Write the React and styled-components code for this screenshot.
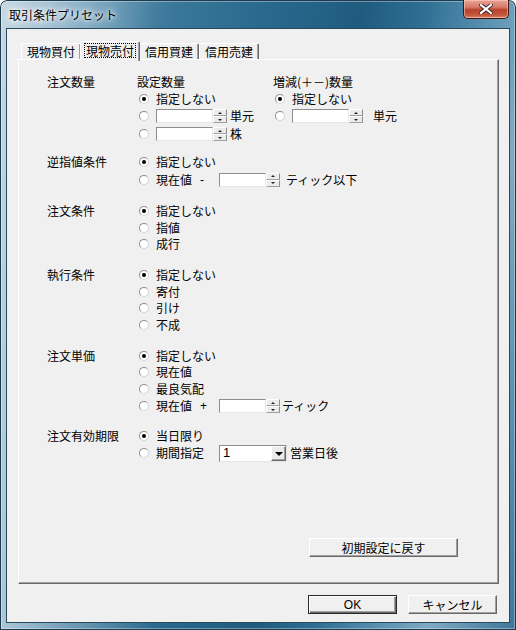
import React from 'react';
import styled, { createGlobalStyle } from 'styled-components';

const GlobalStyle = createGlobalStyle`
  html, body { margin: 0; padding: 0; background: #ffffff; }
  body {
    font-family: "Noto Sans CJK JP", "Noto Sans", "Liberation Sans", sans-serif;
    font-size: 12px;
    color: #000;
  }
`;

const Window = styled.div`
  width: 516px;
  height: 630px;
  box-sizing: border-box;
  padding: 0 7px 8px;
  display: flex;
  flex-direction: column;
  border-radius: 7px 7px 0 0;
  box-shadow: inset 0 0 0 1px #1d3c4f, inset 0 0 0 2px rgba(255, 255, 255, 0.35);
  background:
    linear-gradient(90deg, rgba(255,255,255,0.5) 0%, rgba(255,255,255,0.2) 18%, rgba(255,255,255,0) 30%),
    linear-gradient(100deg, #8fb2c7 0%, #5f93b2 16%, #3a7799 28%, #2a6a8e 42%, #1f5b7f 58%, #2f6f93 68%, #5a90b0 78%, #7eaac3 86%, #3d7698 100%);
`;

const TitleBar = styled.div`
  height: 29px;
  display: flex;
  align-items: flex-start;
`;

const Title = styled.div`
  margin: 7px 0 0 2px;
  line-height: 16px;
  font-size: 12px;
  color: #000;
  text-shadow: 0 0 6px #fff, 0 0 10px #fff, 0 0 3px rgba(255,255,255,0.9);
`;

const CloseButton = styled.div`
  margin-left: auto;
  width: 46px;
  height: 19px;
  box-sizing: border-box;
  border: 1px solid #3b1714;
  border-top: none;
  border-radius: 0 0 5px 5px;
  background: linear-gradient(180deg, #e7a595 0%, #d6796a 40%, #b8402d 55%, #c55a3f 85%, #d88a6e 100%);
  box-shadow: inset 0 0 0 1px rgba(255, 210, 200, 0.55);
  display: flex;
  align-items: center;
  justify-content: center;
`;

const Client = styled.div`
  flex: 1;
  display: flex;
  flex-direction: column;
  background: #f0f0f0;
  box-shadow: 0 0 0 1px #284a5e;
  padding: 0 10px 0 11px;
`;

const TabStrip = styled.div`
  margin-top: 12px;
  height: 18px;
  padding-left: 3px;
  display: flex;
  align-items: flex-end;
`;

const Tab = styled.div`
  position: relative;
  z-index: ${p => (p.$active ? 2 : 0)};
  height: ${p => (p.$active ? 20 : 16)}px;
  margin-bottom: ${p => (p.$active ? -2 : 0)}px;
  margin-left: ${p => (p.$active ? -1 : 0)}px;
  margin-right: ${p => (p.$active ? -1 : 0)}px;
  box-sizing: border-box;
  padding: 0 ${p => (p.$active ? 3 : 5)}px;
  display: flex;
  align-items: ${p => (p.$active ? 'flex-start' : 'center')};
  background: #f0f0f0;
  border-top: 1px solid #ffffff;
  border-left: 1px solid #ffffff;
  border-right: 1px solid #696969;
  border-radius: 2px 2px 0 0;
  box-shadow: inset -1px 0 0 #a0a0a0;
  line-height: 15px;
  white-space: nowrap;
`;

const FocusText = styled.span`
  margin-top: 1px;
  padding: 0 2px;
  outline: 1px dotted #000;
  outline-offset: -1px;
  line-height: 15px;
`;

const Panel = styled.div`
  flex: 1;
  display: flex;
  flex-direction: column;
  box-sizing: border-box;
  border-top: 1px solid #ffffff;
  border-left: 1px solid #ffffff;
  border-right: 1px solid #696969;
  border-bottom: 1px solid #696969;
  box-shadow: inset -1px -1px 0 #a0a0a0;
  padding: 14px 0 26px 28px;
`;

const Group = styled.div`
  display: grid;
  grid-template-columns: 90px auto;
  margin-top: ${p => p.$gap || 0}px;
`;

const GroupLabel = styled.div`
  height: 16.5px;
  line-height: 16.5px;
  white-space: nowrap;
`;

const Options = styled.div`
  display: flex;
  flex-direction: ${p => (p.$row ? 'row' : 'column')};
`;

const SubColumn = styled.div`
  width: ${p => (p.$w ? `${p.$w}px` : 'auto')};
  display: flex;
  flex-direction: column;
`;

const Row = styled.div`
  height: ${p => p.$h || 16.5}px;
  display: flex;
  align-items: center;
  white-space: nowrap;
  line-height: 14px;
`;

const Radio = styled.span`
  flex: none;
  width: 10px;
  height: 10px;
  margin: 0 7px 0 2px;
  box-sizing: border-box;
  border-radius: 50%;
  border: 1px solid #8f8f8f;
  border-right-color: #d4d4d4;
  border-bottom-color: #d4d4d4;
  background: #fff;
  display: flex;
  align-items: center;
  justify-content: center;
  &::after {
    content: '';
    width: 4px;
    height: 4px;
    border-radius: 50%;
    background: ${p => (p.$on ? '#000' : 'transparent')};
  }
`;

const Lead = styled.span`
  width: 63px;
  display: flex;
  align-items: center;
`;

const Sign = styled.span`
  margin-left: 8px;
  font-family: "Liberation Sans", sans-serif;
`;

const Unit = styled.span`
  margin-left: ${p => p.$gap || 3}px;
`;

const Field = styled.span`
  width: ${p => p.$w}px;
  height: 14px;
  box-sizing: border-box;
  background: #fff;
  border-top: 1px solid #8d8d8d;
  border-left: 1px solid #8d8d8d;
  border-right: 1px solid #e6e6e6;
  border-bottom: 1px solid #e6e6e6;
`;

const Spin = styled.span`
  width: 14px;
  height: 14px;
  display: flex;
  flex-direction: column;
`;

const SpinHalf = styled.span`
  flex: 1;
  box-sizing: border-box;
  background: #ebebeb;
  border-top: 1px solid #fff;
  border-left: 1px solid #fff;
  border-right: 1px solid #8d8d8d;
  border-bottom: 1px solid #a0a0a0;
  display: flex;
  align-items: center;
  justify-content: center;
  &::after {
    content: '';
    width: 0;
    height: 0;
    border-left: 2px solid transparent;
    border-right: 2px solid transparent;
    ${p => (p.$up ? 'border-bottom: 2px solid #222;' : 'border-top: 2px solid #222;')}
  }
`;

const Combo = styled.span`
  width: 68px;
  height: 17px;
  box-sizing: border-box;
  background: #fff;
  border-top: 1px solid #8d8d8d;
  border-left: 1px solid #8d8d8d;
  border-right: 1px solid #e6e6e6;
  border-bottom: 1px solid #e6e6e6;
  display: flex;
  align-items: center;
`;

const ComboText = styled.span`
  flex: 1;
  padding-left: 3px;
  font-family: "Liberation Sans", sans-serif;
  font-size: 13px;
  line-height: 14px;
`;

const ComboArrow = styled.span`
  width: 15px;
  height: 15px;
  box-sizing: border-box;
  background: #ebebeb;
  border-top: 1px solid #fff;
  border-left: 1px solid #fff;
  border-right: 1px solid #696969;
  border-bottom: 1px solid #696969;
  box-shadow: inset -1px -1px 0 #a0a0a0;
  display: flex;
  align-items: center;
  justify-content: center;
  &::after {
    content: '';
    border-left: 4px solid transparent;
    border-right: 4px solid transparent;
    border-top: 4px solid #000;
    margin-top: 1px;
  }
`;

const Button = styled.div`
  width: ${p => p.$w}px;
  height: 19px;
  box-sizing: border-box;
  background: #f0f0f0;
  border: 1px solid;
  border-color: ${p => (p.$default ? '#2a2a2a' : '#ffffff #696969 #696969 #ffffff')};
  box-shadow: ${p => (p.$default
    ? 'inset 1px 1px 0 #ffffff, inset -1px -1px 0 #696969, inset -2px -2px 0 #a0a0a0'
    : 'inset -1px -1px 0 #a0a0a0')};
  display: flex;
  align-items: center;
  justify-content: center;
  line-height: 14px;
  white-space: nowrap;
`;

const ResetButton = styled(Button)`
  margin-top: auto;
  align-self: flex-end;
  margin-right: 40px;
`;

const Footer = styled.div`
  display: flex;
  justify-content: flex-end;
  gap: 11px;
  padding: 11px 2px 8px 0;
`;

const OkText = styled.span`
  font-family: "Liberation Sans", sans-serif;
  font-size: 12px;
`;

function SpinBox({ w }) {
  return (
    <>
      <Field $w={w} />
      <Spin>
        <SpinHalf $up />
        <SpinHalf />
      </Spin>
    </>
  );
}

function Option({ on, children, h }) {
  return (
    <Row $h={h}>
      <Radio $on={on} />
      {children}
    </Row>
  );
}

export default function App() {
  return (
    <>
      <GlobalStyle />
      <Window>
        <TitleBar>
          <Title>取引条件プリセット</Title>
          <CloseButton>
            <svg width="14" height="10" viewBox="0 0 14 10">
              <path d="M2 1 L12 9 M12 1 L2 9" stroke="#3a2424" strokeWidth="4" strokeLinecap="square" />
              <path d="M2 1 L12 9 M12 1 L2 9" stroke="#ffffff" strokeWidth="2.2" strokeLinecap="square" />
            </svg>
          </CloseButton>
        </TitleBar>
        <Client>
          <TabStrip>
            <Tab>現物買付</Tab>
            <Tab $active><FocusText>現物売付</FocusText></Tab>
            <Tab>信用買建</Tab>
            <Tab>信用売建</Tab>
          </TabStrip>
          <Panel>
            <Group>
              <GroupLabel>注文数量</GroupLabel>
              <Options $row>
                <SubColumn $w={136}>
                  <Row>設定数量</Row>
                  <Option on>指定しない</Option>
                  <Option h={18}><SpinBox w={57} /><Unit>単元</Unit></Option>
                  <Option h={18}><SpinBox w={57} /><Unit>株</Unit></Option>
                </SubColumn>
                <SubColumn>
                  <Row>増減(＋－)数量</Row>
                  <Option on>指定しない</Option>
                  <Option h={18}><SpinBox w={57} /><Unit $gap={10}>単元</Unit></Option>
                </SubColumn>
              </Options>
            </Group>

            <Group $gap={11}>
              <GroupLabel>逆指値条件</GroupLabel>
              <Options>
                <Option on>指定しない</Option>
                <Option h={18}>
                  <Lead>現在値<Sign>-</Sign></Lead>
                  <SpinBox w={47} />
                  <Unit $gap={6}>ティック以下</Unit>
                </Option>
              </Options>
            </Group>

            <Group $gap={14.5}>
              <GroupLabel>注文条件</GroupLabel>
              <Options>
                <Option on>指定しない</Option>
                <Option>指値</Option>
                <Option>成行</Option>
              </Options>
            </Group>

            <Group $gap={14.5}>
              <GroupLabel>執行条件</GroupLabel>
              <Options>
                <Option on>指定しない</Option>
                <Option>寄付</Option>
                <Option>引け</Option>
                <Option>不成</Option>
              </Options>
            </Group>

            <Group $gap={14.5}>
              <GroupLabel>注文単価</GroupLabel>
              <Options>
                <Option on>指定しない</Option>
                <Option>現在値</Option>
                <Option>最良気配</Option>
                <Option h={18}>
                  <Lead>現在値<Sign>+</Sign></Lead>
                  <SpinBox w={47} />
                  <Unit $gap={2}>ティック</Unit>
                </Option>
              </Options>
            </Group>

            <Group $gap={12.5}>
              <GroupLabel>注文有効期限</GroupLabel>
              <Options>
                <Option on>当日限り</Option>
                <Option h={18}>
                  <Lead>期間指定</Lead>
                  <Combo>
                    <ComboText>1</ComboText>
                    <ComboArrow />
                  </Combo>
                  <Unit>営業日後</Unit>
                </Option>
              </Options>
            </Group>

            <ResetButton $w={149}>初期設定に戻す</ResetButton>
          </Panel>
          <Footer>
            <Button $w={89} $default><OkText>OK</OkText></Button>
            <Button $w={89}>キャンセル</Button>
          </Footer>
        </Client>
      </Window>
    </>
  );
}
